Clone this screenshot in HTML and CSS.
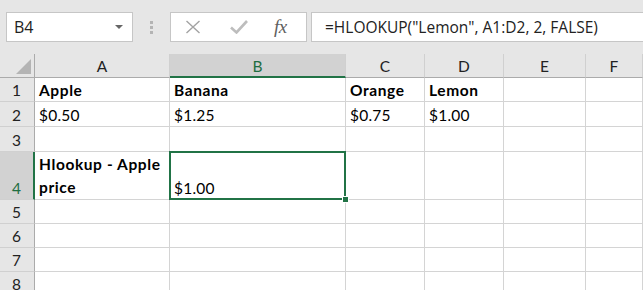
FILE: index.html
```html
<!DOCTYPE html>
<html>
<head>
<meta charset="utf-8">
<link rel="stylesheet" href="styles.css">
</head>
<body>
<div class="app">
  <div class="toolbar">
    <div class="namebox">
      <span class="name">B4</span>
      <span class="dd"></span>
    </div>
    <div class="grip"><i></i><i></i><i></i></div>
    <div class="fxbox">
      <svg class="ico-x" width="16" height="14" viewBox="0 0 16 14"><path d="M1.5 1 L14.5 13 M14.5 1 L1.5 13" stroke="#a3a3a3" stroke-width="1.4" fill="none"/></svg>
      <svg class="ico-ok" width="18" height="14" viewBox="0 0 18 14"><path d="M1 7.5 L6.5 12.5 L17 1" stroke="#bdbdbd" stroke-width="2.6" fill="none"/></svg>
      <span class="fx">fx</span>
    </div>
    <div class="formula">=HLOOKUP("Lemon", A1:D2, 2, FALSE)</div>
  </div>
  <div class="sheet">
    <div class="hd corner"><span class="tri"></span></div>
    <div class="hd col">A</div>
    <div class="hd col sel">B</div>
    <div class="hd col">C</div>
    <div class="hd col">D</div>
    <div class="hd col">E</div>
    <div class="hd col">F</div>

    <div class="hd row">1</div>
    <div class="c b">Apple</div>
    <div class="c b">Banana</div>
    <div class="c b">Orange</div>
    <div class="c b">Lemon</div>
    <div class="c"></div>
    <div class="c"></div>

    <div class="hd row">2</div>
    <div class="c">$0.50</div>
    <div class="c">$1.25</div>
    <div class="c">$0.75</div>
    <div class="c">$1.00</div>
    <div class="c"></div>
    <div class="c"></div>

    <div class="hd row">3</div>
    <div class="c"></div>
    <div class="c"></div>
    <div class="c"></div>
    <div class="c"></div>
    <div class="c"></div>
    <div class="c"></div>

    <div class="hd row sel">4</div>
    <div class="c b wrap">Hlookup - Apple price</div>
    <div class="c active">$1.00<span class="selbox"><span class="handle"></span></span></div>
    <div class="c"></div>
    <div class="c"></div>
    <div class="c"></div>
    <div class="c"></div>

    <div class="hd row">5</div>
    <div class="c"></div><div class="c"></div><div class="c"></div><div class="c"></div><div class="c"></div><div class="c"></div>
    <div class="hd row">6</div>
    <div class="c"></div><div class="c"></div><div class="c"></div><div class="c"></div><div class="c"></div><div class="c"></div>
    <div class="hd row">7</div>
    <div class="c"></div><div class="c"></div><div class="c"></div><div class="c"></div><div class="c"></div><div class="c"></div>
    <div class="hd row">8</div>
    <div class="c"></div><div class="c"></div><div class="c"></div><div class="c"></div><div class="c"></div><div class="c"></div>
  </div>
</div>
</body>
</html>
```

FILE: styles.css
```css
* { box-sizing: border-box; }
html, body { margin: 0; padding: 0; }
body {
  width: 643px;
  height: 290px;
  overflow: hidden;
  background: #e6e6e6;
  font-family: Lato, "Liberation Sans", sans-serif;
  color: #000;
}
.app { width: 643px; }

.toolbar {
  height: 54px;
  display: flex;
  align-items: flex-start;
  padding-top: 12px;
  padding-left: 6px;
}
.namebox {
  width: 127px;
  height: 30px;
  background: #fff;
  border: 1px solid #c6c6c6;
  display: flex;
  align-items: center;
  justify-content: space-between;
  padding: 0 9px 0 7px;
}
.name, .formula {
  font-family: "Open Sans", "Noto Sans", sans-serif;
  color: #222;
}
.name { font-size: 16px; }
.dd {
  width: 0; height: 0;
  border-left: 4px solid transparent;
  border-right: 4px solid transparent;
  border-top: 4px solid #666;
}
.grip {
  width: 37px;
  height: 30px;
  display: flex;
  flex-direction: column;
  align-items: center;
  justify-content: center;
  gap: 2px;
}
.grip i {
  display: block;
  width: 3px;
  height: 3px;
  background: #b4b4b4;
}
.fxbox {
  width: 137px;
  height: 30px;
  background: #fff;
  border: 1px solid #c6c6c6;
  display: flex;
  align-items: center;
  padding-left: 14px;
}
.ico-x { margin-right: 29px; }
.ico-ok { margin-right: 26px; }
.fx {
  font-family: "Liberation Serif", serif;
  font-style: italic;
  font-size: 19px;
  color: #606060;
  letter-spacing: -0.5px;
  line-height: 1;
  margin-top: -2px;
}
.formula {
  flex: 1;
  height: 30px;
  margin-left: 4px;
  background: #fff;
  border: 1px solid #c6c6c6;
  border-right: none;
  display: flex;
  align-items: center;
  padding-left: 13px;
  font-size: 15.5px;
}

.sheet {
  display: grid;
  grid-template-columns: 35px 135px 176px 79px 79px 82px 1fr;
  grid-template-rows: 24px 24px 25px 25px 48px 24px 24px 24px 24px;
  background: #fff;
}
.hd {
  background: #e6e6e6;
  font-size: 15.5px;
  color: #222;
  display: flex;
  align-items: center;
  justify-content: center;
}
.col {
  border-right: 1px solid #d0d0d0;
  border-bottom: 1px solid #ababab;
  padding-top: 1px;
}
.col.sel {
  background: #d2d2d2;
  color: #1e6e42;
  border-bottom: 2px solid #217346;
}
.corner {
  border-right: 1px solid #ababab;
  border-bottom: 1px solid #ababab;
  position: relative;
}
.tri {
  position: absolute;
  right: 3px;
  bottom: 3px;
  width: 0; height: 0;
  border-left: 15px solid transparent;
  border-bottom: 15px solid #b4b4b4;
}
.row {
  border-right: 1px solid #ababab;
  border-bottom: 1px solid #d0d0d0;
  align-items: flex-end;
  padding-bottom: 2px;
  padding-right: 1px;
}
.row.sel {
  background: #d2d2d2;
  color: #1e6e42;
  border-right: 2px solid #217346;
  padding-right: 0;
}
.c {
  border-right: 1px solid #d4d4d4;
  border-bottom: 1px solid #d4d4d4;
  font-size: 15.5px;
  line-height: 18px;
  padding: 0 3px 2px 4px;
  display: flex;
  align-items: flex-end;
  white-space: nowrap;
  color: #000;
  letter-spacing: 0.2px;
}
.c.b { font-weight: 700; letter-spacing: 0.6px; }
.c.wrap {
  white-space: normal;
  line-height: 23px;
  padding-bottom: 0;
}
.c.active { position: relative; }
.selbox {
  position: absolute;
  left: -1px;
  top: -1px;
  width: 177px;
  height: 49px;
  border: 2px solid #217346;
  z-index: 2;
}
.handle {
  position: absolute;
  right: -5px;
  bottom: -5px;
  width: 7px;
  height: 7px;
  background: #217346;
  border: 1px solid #fff;
}
```
